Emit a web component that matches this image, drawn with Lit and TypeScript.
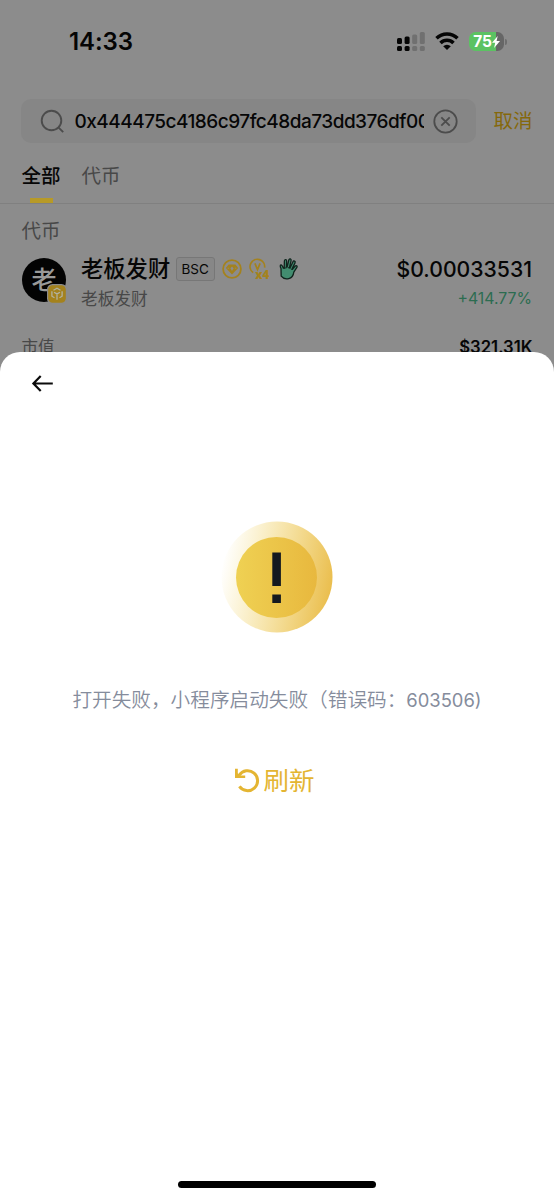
import { LitElement, html, css, svg } from "lit";
import { customElement } from "lit/decorators.js";

const shared = css`
  * { box-sizing: border-box; }
  svg { display: block; flex: none; overflow: visible; }
`;

@customElement("status-bar")
class StatusBar extends LitElement {
  static styles = [shared, css`
    :host { display: flex; height: 99px; padding: 27px 47px 0 69px; align-items: flex-start; justify-content: space-between; }
    .time { font: 600 24px/30px Inter, sans-serif; letter-spacing: -0.1px; color: #050505; }
    .icons { display: flex; align-items: center; height: 29px; }
    .signal { width: 28px; height: 19px; margin-right: 10px; }
    .wifi { margin: -2px 10px 0 0; }
    .battery { display: flex; align-items: center; gap: 1px; }
    .cell { display: flex; align-items: center; justify-content: center; width: 35px; height: 19px; border-radius: 6.5px; background: linear-gradient(90deg, #5bc262 0 27px, #666 27px); color: #fff; font: 700 15.5px/19px Inter, sans-serif; letter-spacing: -0.2px; }
    .nub { width: 2px; height: 6px; border-radius: 0 2px 2px 0; background: #6d6d6d; }
  `];
  render() {
    const bars = [[0, 6, 6], [7.6, 4.6, 7.4], [15.2, 2.6, 9.4], [22.8, 0, 12]];
    return html`
      <div class="time">14:33</div>
      <div class="icons">
        <svg class="signal" viewBox="0 0 28 19">
          ${bars.map(([x, y, h], i) => svg`
            <rect x=${x} y=${y} width="5" height=${h} rx="1.5" fill=${i < 2 ? "#050505" : "#707070"}></rect>
            <rect x=${x} y="14" width="5" height="5" rx="1.5" fill=${i < 2 ? "#050505" : "#707070"}></rect>`)}
        </svg>
        <svg class="wifi" width="24" height="18" viewBox="0 0 24 18" fill="none" stroke="#050505" stroke-width="3.5">
          <path d="M1.5 6.2a15 15 0 0 1 21 0"></path>
          <path d="M5.5 10.9a9.2 9.2 0 0 1 13 0"></path>
          <path d="M12 18l-3.8-3.8a5.4 5.4 0 0 1 7.6 0z" fill="#050505" stroke="none"></path>
        </svg>
        <div class="battery">
          <div class="cell">75<svg width="8" height="12" viewBox="0 0 8 12"><path d="M5.7 0L0 6.8h3.2L2.1 12 8 5H4.6z" fill="#fff"></path></svg></div>
          <div class="nub"></div>
        </div>
      </div>`;
  }
}

@customElement("search-page")
class SearchPage extends LitElement {
  static styles = [shared, css`
    :host { display: block; height: 1200px; background: #8c8c8c; color: #060606; font-family: Lato, "Noto Sans CJK SC", sans-serif; }
    .search { display: flex; align-items: center; height: 44px; padding: 0 21px; }
    .field { display: flex; align-items: center; width: 455px; height: 44px; border-radius: 10px; background: #868686; padding: 0 18px 0 19px; }
    .query { width: 349px; margin-left: 9.5px; overflow: hidden; white-space: nowrap; font: 500 19px/30px Inter, sans-serif; letter-spacing: -0.51px; padding-top: 1px; }
    .clear { margin-left: 9.5px; }
    .cancel { margin-left: 17.5px; font-size: 19.5px; line-height: 30px; color: #85680b; white-space: nowrap; }
    .tabs { display: flex; gap: 21px; height: 61px; padding: 16.5px 21.5px 0; border-bottom: 1px solid #808080; font-size: 19.5px; line-height: 32px; color: #484848; }
    .tab { display: flex; flex-direction: column; align-items: center; justify-content: space-between; height: 43.5px; }
    .on { color: #060606; font-weight: 500; }
    .mark { width: 23px; height: 5px; background: #b79a27; }
    .label { height: 54px; padding: 10.5px 21.5px 0; font-size: 19.5px; line-height: 32px; color: #484848; }
    .token { display: flex; height: 68px; padding: 0 22px; }
    .avatar { position: relative; width: 44px; height: 44px; border-radius: 50%; background: #030303; color: #999; font-size: 25px; font-weight: 500; line-height: 43px; text-align: center; }
    .badge { position: absolute; left: 25px; top: 26px; }
    .info { flex: 1; margin-left: 15px; }
    .title { display: flex; align-items: center; height: 22px; }
    .name { font-size: 22.3px; font-weight: 500; line-height: 22px; }
    .chain { width: 39px; height: 24px; margin: 0 7px 0 5.5px; border: 1px solid #777; border-radius: 3px; background: #878787; font: 400 13.5px/22px Inter, sans-serif; text-align: center; }
    .tags { display: flex; align-items: center; gap: 7.5px; }
    .sub { margin-top: 8px; font-size: 16.7px; line-height: 22px; color: #484848; }
    .value { text-align: right; }
    .price { font: 500 21.2px/22px Inter, sans-serif; }
    .change { margin-top: 8px; font: 400 15.8px/22px Inter, sans-serif; color: #2c6c51; }
    .market { display: flex; justify-content: space-between; padding: 9px 21.5px; font-size: 16.5px; line-height: 24px; color: #484848; }
    .cap { font: 600 16.7px/24px Inter, sans-serif; color: #060606; }
    .mult { font: 900 12px "Open Sans", sans-serif; }
  `];
  render() {
    return html`
      <status-bar></status-bar>
      <div class="search">
        <div class="field">
          <svg width="25" height="25" viewBox="0 0 25 25" fill="none" stroke="#4c4c4c" stroke-width="1.9"><circle cx="11.5" cy="11.5" r="9.8"></circle><path d="M18.4 18.4l4.8 4.8"></path></svg>
          <div class="query">0x444475c4186c97fc48da73dd376df00</div>
          <svg class="clear" width="25" height="25" viewBox="0 0 25 25" fill="none" stroke="#4c4c4c" stroke-width="1.8"><circle cx="12.5" cy="12.5" r="11.2"></circle><path d="M8.3 8.3l8.4 8.4M16.7 8.3l-8.4 8.4"></path></svg>
        </div>
        <div class="cancel">取消</div>
      </div>
      <div class="tabs">
        <div class="tab on">全部<div class="mark"></div></div>
        <div class="tab">代币</div>
      </div>
      <div class="label">代币</div>
      <div class="token">
        <div class="avatar">老
          <svg class="badge" width="20" height="20" viewBox="0 0 20 20">
            <rect x="0" y="0" width="20" height="20" rx="5.5" fill="#8c8c8c"></rect>
            <rect x="1.2" y="1.2" width="17.6" height="17.6" rx="4.5" fill="#a4821d"></rect>
            <g fill="none" stroke="#b2b2a0" stroke-width="1.3"><path d="M6.5 6.2L10 4.2l3.5 2M4.9 7.3v4.9l2.6 1.5M15.1 7.3v4.9l-2.6 1.5M7 8.2l3 1.7 3-1.7M10 10v5.8"></path></g>
          </svg>
        </div>
        <div class="info">
          <div class="title">
            <div class="name">老板发财</div>
            <div class="chain">BSC</div>
            <div class="tags">
              <svg width="20" height="20" viewBox="0 0 20 20" fill="none" stroke="#a4821d"><circle cx="10" cy="10" r="8.9" stroke-width="1.8"></circle><path d="M6.6 5.4h6.8L16.2 9 10 15.4 3.8 9z" fill="#a4821d" stroke="none"></path><path d="M10 7.4L8.4 9.3l1.6 2.6 1.6-2.6z" fill="#8c8c8c" stroke="none"></path><path d="M5.6 9.2h1.6M12.8 9.2h1.6" stroke="#8c8c8c" stroke-width=".8"></path></svg>
              <svg width="22" height="22" viewBox="0 0 22 22" fill="none" stroke="#a4821d" stroke-width="1.7"><path d="M4.2 14.6A7.3 7.3 0 1 1 15.6 9.6"></path><path d="M5.9 5.3l2.6 6.2 2.6-6.2"></path><text class="mult" x="6.3" y="20.5" fill="#a4821d" stroke="none" textLength="14" lengthAdjust="spacingAndGlyphs">x4</text></svg>
              <svg width="19" height="22" viewBox="0 0 19 22" stroke="#10241d" stroke-width="1.3" stroke-linejoin="round" fill="#428d70"><path d="M2.2 18.2L2 10.6Q.5 7.2 2 6.8q1.1-.1 2.4 3.4l.8.1L5.4 3q.2-1.6 1.4-1.4 1 .2.8 1.6l-.2 5.9.7-.1L9.8 2q.4-1.4 1.5-1.1 1.1.4.8 1.7l-1.7 7 .6.3L14 3.7q.7-1.2 1.6-.6 1 .6.4 1.8l-2.9 6 .3.4 2.8-3.2q1-.9 1.7-.1.6.8-.2 1.7l-2.9 4.4q-.7 5.6-5.1 6.6-4.8 1-7.5-2.5z"></path><path d="M5.4 9.8L7.4 10M9 9.5l1.4.8M11.7 10.8l1 .9" stroke-width="1"></path></svg>
            </div>
          </div>
          <div class="sub">老板发财</div>
        </div>
        <div class="value">
          <div class="price">$0.00033531</div>
          <div class="change">+414.77%</div>
        </div>
      </div>
      <div class="market"><span>市值</span><span class="cap">$321.31K</span></div>`;
  }
}

@customElement("error-sheet")
class ErrorSheet extends LitElement {
  static styles = [shared, css`
    :host { display: flex; flex-direction: column; align-items: center; background: #fff; border-radius: 20px 20px 0 0; font-family: Inter, "Noto Sans CJK SC", sans-serif; }
    .head { width: 100%; height: 169px; padding: 22.5px 32px; }
    .message { margin-top: 51px; font-family: Inter, "Noto Sans CJK SC DemiLight", "Noto Sans CJK SC", sans-serif; font-size: 19.65px; font-weight: 350; line-height: 32px; color: #858c9c; white-space: nowrap; }
    .code { font-size: 18.4px; font-weight: 400; }
    .retry { display: flex; align-items: center; gap: 4px; margin-top: 46px; margin-right: 4px; color: #e4b532; font-size: 25.5px; line-height: 38px; }
    .icon { margin-top: -2px; }
    .home { width: 198px; height: 7px; border-radius: 4px; background: #000; margin: auto 0 12px; }
  `];
  render() {
    return html`
      <div class="head"><svg width="21" height="17" viewBox="0 0 21 17" fill="none" stroke="#0b0b0b" stroke-width="2.2"><path d="M20.8 8.5H1.6M8.7 1L1.4 8.5l7.3 7.5"></path></svg></div>
      <svg width="112" height="112" viewBox="0 0 112 112">
        <defs>
          <linearGradient id="halo" x1="0" y1="0.4" x2="1" y2="0.6"><stop offset="0" stop-color="#f0d050" stop-opacity="0"></stop><stop offset="1" stop-color="#eabd4c"></stop></linearGradient>
          <linearGradient id="disc"><stop offset="0" stop-color="#efd153"></stop><stop offset="1" stop-color="#e8b83e"></stop></linearGradient>
        </defs>
        <circle cx="56" cy="56" r="55.5" fill="url(#halo)"></circle>
        <circle cx="55.5" cy="56.5" r="40.5" fill="url(#disc)"></circle>
        <path d="M51.3 31.5h8.6V65h-8.6zM51.3 73.5h8.6V82h-8.6z" fill="#14191f"></path>
      </svg>
      <div class="message">打开失败，小程序启动失败（错误码：<span class="code">603506)</span></div>
      <div class="retry">
        <svg class="icon" width="24" height="24" viewBox="0 0 24 24" fill="none" stroke="#e4b532" stroke-width="3"><path d="M4.2 7.2A10 10 0 1 1 4.4 18.4"></path><path d="M0 .8h2.8v4.5l2.4 2.2h5V10H0z" fill="#e4b532" stroke="none"></path></svg>
        <span>刷新</span>
      </div>
      <div class="home"></div>`;
  }
}

@customElement("app-root")
class AppRoot extends LitElement {
  static styles = css`
    :host { display: block; position: relative; width: 554px; height: 1200px; overflow: hidden; }
    .sheet { position: absolute; left: 0; right: 0; top: 352px; bottom: 0; }
  `;
  render() {
    return html`<search-page></search-page><error-sheet class="sheet"></error-sheet>`;
  }
}
